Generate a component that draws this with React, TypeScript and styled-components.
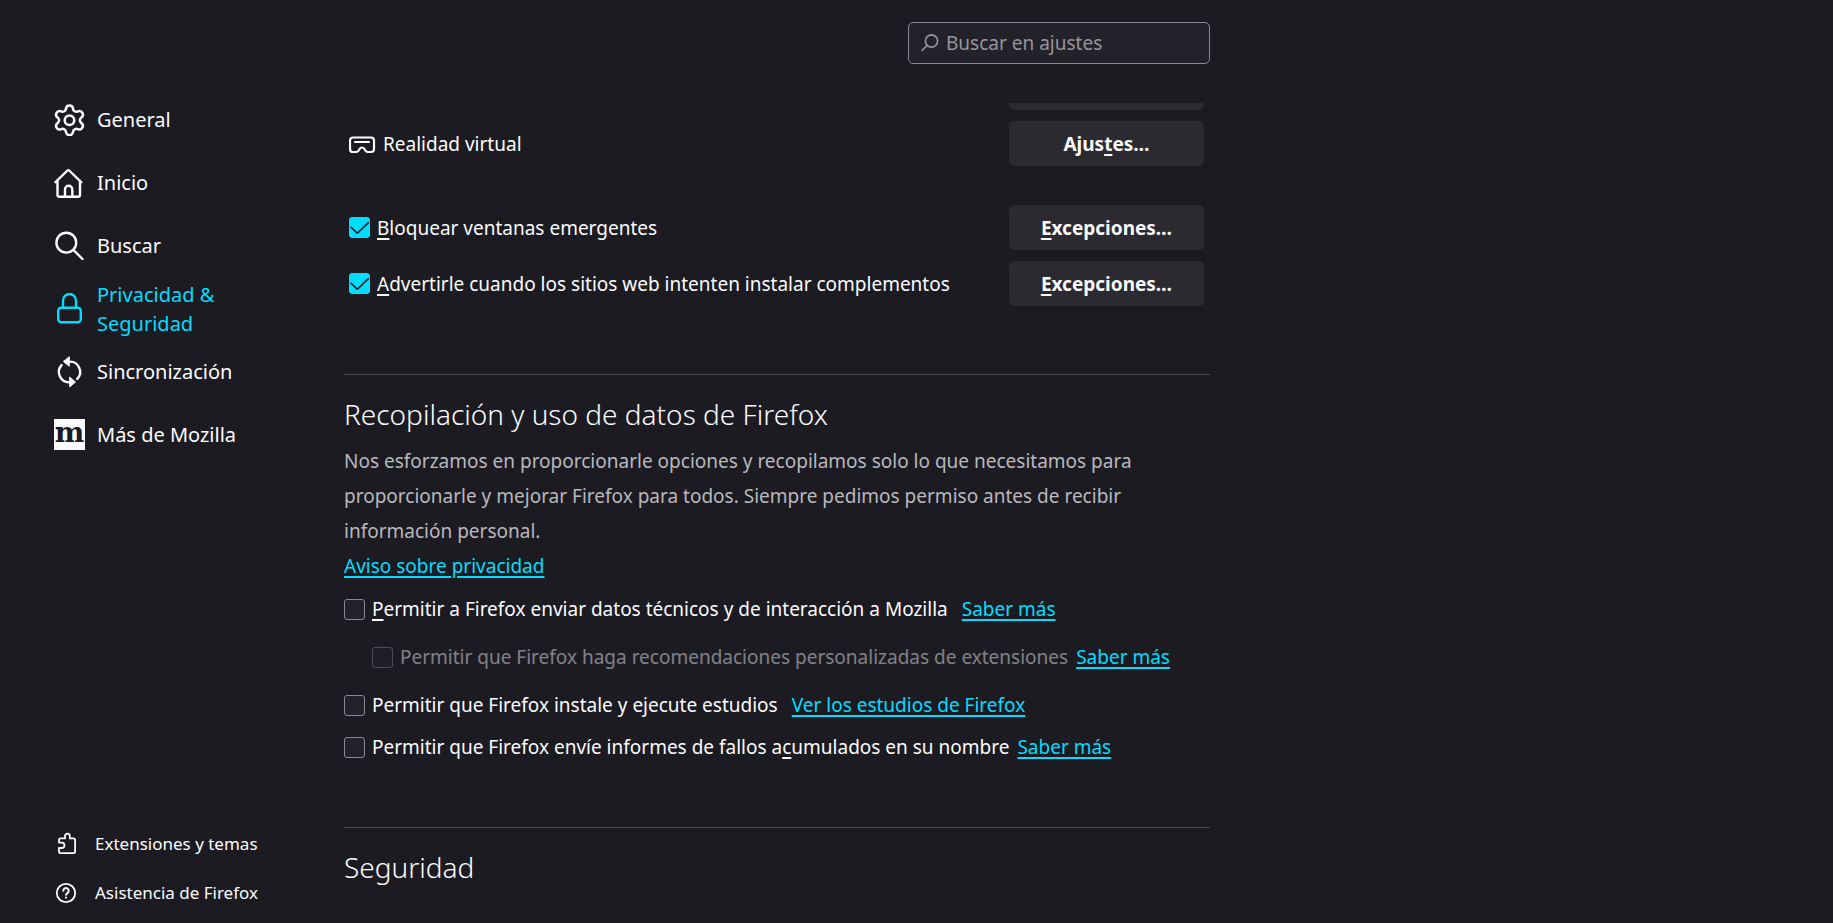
import React from "react";
import styled, { createGlobalStyle, css } from "styled-components";

const color = {
  page: "#1c1b22",
  text: "#fbfbfe",
  muted: "#b9b9bd",
  accent: "#00ddff",
  button: "#2b2a31",
  field: "#23222b",
  line: "#4b4a50",
  border: "#8a898f",
};

const GlobalStyle = createGlobalStyle`
  *, *::before, *::after { box-sizing: border-box; }
  body {
    margin: 0;
    background: ${color.page};
    color: ${color.text};
    font-family: "Noto Sans", "Open Sans", sans-serif;
    font-size: 19px;
    line-height: 28px;
  }
`;

const Page = styled.div`
  display: flex;
  height: 100vh;
  overflow: hidden;
`;

const Sidebar = styled.aside`
  display: flex;
  flex-direction: column;
  justify-content: space-between;
  flex: 0 0 344px;
  padding: 88px 48px 6px 54px;
`;

const NavList = styled.nav`
  display: flex;
  flex-direction: column;
`;

const NavLink = styled.a<{ $active?: boolean }>`
  display: flex;
  align-items: center;
  gap: 11px;
  width: 190px;
  height: 63px;
  color: ${(p) => (p.$active ? color.accent : color.text)};
  font-size: 20px;
  line-height: 29px;
  text-decoration: none;
`;

const FooterLink = styled.a`
  display: flex;
  align-items: center;
  gap: 16px;
  height: 49px;
  padding-left: 1px;
  color: ${color.text};
  font-size: 17px;
  text-decoration: none;
`;

const Icon = styled.svg`
  flex: none;
  fill: none;
  stroke: currentColor;
  stroke-linecap: round;
  stroke-linejoin: round;
`;

const MozillaMark = styled.span`
  display: grid;
  place-items: center;
  flex: none;
  width: 31px;
  height: 31px;
  margin-right: 1px;
  background: ${color.text};
  color: ${color.page};
  font: bold 28px/24px "DejaVu Serif", serif;
  padding-bottom: 4px;
`;

const Main = styled.main`
  display: flex;
  flex-direction: column;
  flex: 1;
  min-width: 0;
  max-width: 866px;
`;

const TopBar = styled.header`
  display: flex;
  flex: none;
  justify-content: flex-end;
  height: 103px;
  padding-top: 22px;
`;

const SearchBox = styled.label`
  display: flex;
  align-items: center;
  gap: 7px;
  width: 302px;
  height: 42px;
  padding: 0 12px;
  border: 1px solid ${color.border};
  border-radius: 5px;
  background: ${color.field};
  color: #96959b;
`;

const SearchInput = styled.input`
  flex: 1;
  min-width: 0;
  padding: 0;
  border: 0;
  outline: 0;
  background: transparent;
  color: ${color.text};
  font: inherit;
  &::placeholder { color: #96959b; opacity: 1; }
`;

const ScrollArea = styled.div`
  flex: 1;
  min-height: 0;
  overflow: hidden;
`;

const Permissions = styled.section`
  display: flex;
  flex-direction: column;
  gap: 11px;
  margin-top: -38px;
  padding: 0 6px 6px 5px;
`;

const PermissionRow = styled.div<{ $spaced?: boolean }>`
  display: flex;
  align-items: center;
  justify-content: space-between;
  ${(p) => p.$spaced && css`margin-top: 28px;`}
`;

const Label = styled.label<{ $disabled?: boolean }>`
  display: flex;
  align-items: center;
  gap: 7px;
  opacity: ${(p) => (p.$disabled ? 0.45 : 1)};
`;

const Button = styled.button`
  width: 195px;
  height: 45px;
  padding: 0;
  border: 0;
  border-radius: 5px;
  background: ${color.button};
  color: ${color.text};
  font: inherit;
  font-weight: 700;
`;

const AccessKey = styled.span`
  text-decoration: underline;
  text-decoration-thickness: 2px;
  text-underline-offset: 3px;
  text-decoration-skip-ink: none;
`;

const Box = styled.span`
  display: grid;
  flex: none;
  color: ${color.page};
  & > * { grid-area: 1 / 1; }
  & > svg { pointer-events: none; }
`;

const BoxInput = styled.input`
  appearance: none;
  width: 21px;
  height: 21px;
  margin: 0;
  border: 1px solid ${color.border};
  border-radius: 3px;
  background: ${color.field};
  &:checked { border-color: ${color.accent}; background: ${color.accent}; }
`;

const Section = styled.section`
  margin-top: 62px;
  border-top: 1px solid ${color.line};
`;

const SectionTitle = styled.h1`
  margin: 19px 0 0;
  font-size: 28px;
  font-weight: 300;
  line-height: 40px;
`;

const SubTitle = styled.h2`
  margin: 32px 0 0;
  font-size: 19px;
  font-weight: 700;
  line-height: 28px;
  white-space: nowrap;
`;

const Description = styled.p`
  margin: 10px 0 0;
  color: ${color.muted};
  line-height: 35px;
`;

const Link = styled.a`
  color: ${color.accent};
  text-decoration: underline;
  text-decoration-thickness: 2px;
  text-underline-offset: 3px;
`;

const Options = styled.div`
  display: flex;
  flex-direction: column;
  padding-top: 1px;
`;

const OptionRow = styled.div<{ $indent?: boolean; $compact?: boolean; $gap?: number }>`
  display: flex;
  align-items: center;
  gap: ${(p) => p.$gap ?? 12}px;
  height: ${(p) => (p.$compact ? 36 : 48)}px;
  padding-left: ${(p) => (p.$indent ? 28 : 0)}px;
  white-space: nowrap;
`;

function Check(props: { checked?: boolean; disabled?: boolean }) {
  return (
    <Box>
      <BoxInput type="checkbox" defaultChecked={props.checked} disabled={props.disabled} />
      {props.checked && (
        <Icon width="21" height="21" viewBox="0 0 21 21" strokeWidth="1.5">
          <path d="M2 10.3l5.6 5.3q.7.6 1.4 0L19.3 5.6" />
        </Icon>
      )}
    </Box>
  );
}

const NavIcon = (props: { children: React.ReactNode }) => (
  <Icon width="32" height="32" viewBox="0 0 32 32" strokeWidth="2.4">
    {props.children}
  </Icon>
);

export default function App() {
  return (
    <>
      <GlobalStyle />
      <Page>
        <Sidebar>
          <NavList>
            <NavLink href="#general">
              <NavIcon>
                <g transform="translate(-2.4 -1.6) scale(1.49)" strokeWidth="1.7">
                  <path d="M9.671 4.136a2.34 2.34 0 0 1 4.659 0 2.34 2.34 0 0 0 3.319 1.915 2.34 2.34 0 0 1 2.33 4.033 2.34 2.34 0 0 0 0 3.831 2.34 2.34 0 0 1-2.33 4.033 2.34 2.34 0 0 0-3.319 1.915 2.34 2.34 0 0 1-4.659 0 2.34 2.34 0 0 0-3.32-1.915 2.34 2.34 0 0 1-2.33-4.033 2.34 2.34 0 0 0 0-3.831A2.34 2.34 0 0 1 6.35 6.051a2.34 2.34 0 0 0 3.319-1.915" />
                  <circle cx="12" cy="12" r="3.2" />
                </g>
              </NavIcon>
              General
            </NavLink>
            <NavLink href="#inicio">
              <NavIcon>
                <path d="M1.5 15.2L12.9 4a2 2 0 0 1 2.8 0l11.5 11.2M3.5 13.8v13.9a2 2 0 0 0 2 2H24a2 2 0 0 0 2-2V13.8M11 29.5v-7.1a3.65 3.65 0 0 1 7.3 0v7.1" />
              </NavIcon>
              Inicio
            </NavLink>
            <NavLink href="#buscar">
              <NavIcon>
                <circle cx="12.3" cy="12.7" r="9.9" />
                <path d="M19.5 20l9 9" />
              </NavIcon>
              Buscar
            </NavLink>
            <NavLink href="#privacidad" $active aria-current="page">
              <NavIcon>
                <rect x="4.2" y="14.7" width="22.6" height="14.6" rx="3" />
                <path d="M9 14.5V7.5a6.5 6.5 0 0 1 13 0v7" />
              </NavIcon>
              Privacidad & Seguridad
            </NavLink>
            <NavLink href="#sincronizacion">
              <NavIcon>
                <path d="M15.5 5.6A10.2 10.2 0 0 1 23.2 22.9M15.5 26.2A10.2 10.2 0 0 1 7.6 9.1" />
                <path d="M15.3 1.1v9.2L9.6 5.7zM15.7 21.5v9.4l5.6-4.7z" fill="currentColor" strokeWidth="1" />
              </NavIcon>
              Sincronización
            </NavLink>
            <NavLink href="#mas">
              <MozillaMark aria-hidden="true">m</MozillaMark>
              Más de Mozilla
            </NavLink>
          </NavList>
          <NavList>
            <FooterLink href="#extensiones">
              <Icon width="24" height="24" viewBox="0 0 24 24" strokeWidth="1.8">
                <path d="M4 10.6V8a1.6 1.6 0 0 1 1.6-1.6H10V4.1a2.4 2.4 0 0 1 4.8 0v2.3h3.7A1.6 1.6 0 0 1 20.1 8v11.6a1.6 1.6 0 0 1-1.6 1.6H5.6A1.6 1.6 0 0 1 4 19.6V16h2.8a2.7 2.7 0 0 0 0-5.4z" />
              </Icon>
              Extensiones y temas
            </FooterLink>
            <FooterLink href="#asistencia">
              <Icon width="24" height="24" viewBox="0 0 24 24" strokeWidth="1.8">
                <circle cx="11" cy="12" r="9.2" />
                <path d="M8.3 9.8a2.7 2.7 0 1 1 4.5 2q-1.8 1.1-1.8 2M11 16.6v.1" strokeWidth="2" />
              </Icon>
              Asistencia de Firefox
            </FooterLink>
          </NavList>
        </Sidebar>
        <Main>
          <TopBar>
            <SearchBox>
              <Icon width="18" height="18" viewBox="0 0 18 18" strokeWidth="1.6">
                <circle cx="10.5" cy="7" r="6.1" />
                <path d="M6 11.6L1 16.4" />
              </Icon>
              <SearchInput type="search" placeholder="Buscar en ajustes" aria-label="Buscar en ajustes" />
            </SearchBox>
          </TopBar>
          <ScrollArea>
            <Permissions>
              <PermissionRow>
                <span />
                <Button aria-label="Ajustes" />
              </PermissionRow>
              <PermissionRow>
                <Label as="span">
                  <Icon width="27" height="20" viewBox="1 -1 27 20" strokeWidth="2.2">
                    <path d="M5 2.5h18a3 3 0 0 1 3 3V14a3 3 0 0 1-3 3h-3.3a2.5 2.5 0 0 1-2.1-1.2l-1.3-2a2.7 2.7 0 0 0-4.6 0l-1.3 2A2.5 2.5 0 0 1 8.300 17H5a3 3 0 0 1-3-3V5.500a3 3 0 0 1 3-3zM7 7h14" />
                  </Icon>
                  Realidad virtual
                </Label>
                <Button>
                  Ajus<AccessKey>t</AccessKey>es…
                </Button>
              </PermissionRow>
              <PermissionRow $spaced>
                <Label>
                  <Check checked />
                  <span><AccessKey>B</AccessKey>loquear ventanas emergentes</span>
                </Label>
                <Button>
                  <AccessKey>E</AccessKey>xcepciones…
                </Button>
              </PermissionRow>
              <PermissionRow>
                <Label>
                  <Check checked />
                  <span><AccessKey>A</AccessKey>dvertirle cuando los sitios web intenten instalar complementos</span>
                </Label>
                <Button>
                  <AccessKey>E</AccessKey>xcepciones…
                </Button>
              </PermissionRow>
            </Permissions>

            <Section>
              <SectionTitle>Recopilación y uso de datos de Firefox</SectionTitle>
              <Description>
                Nos esforzamos en proporcionarle opciones y recopilamos solo lo que necesitamos para
                <br />
                proporcionarle y mejorar Firefox para todos. Siempre pedimos permiso antes de recibir
                <br />
                información personal.
                <br />
                <Link href="#aviso">Aviso sobre privacidad</Link>
              </Description>
              <Options>
                <OptionRow $gap={14}>
                  <Label>
                    <Check />
                    <span><AccessKey>P</AccessKey>ermitir a Firefox enviar datos técnicos y de interacción a Mozilla</span>
                  </Label>
                  <Link href="#datos">Saber más</Link>
                </OptionRow>
                <OptionRow $indent $gap={8}>
                  <Label $disabled>
                    <Check disabled />
                    Permitir que Firefox haga recomendaciones personalizadas de extensiones
                  </Label>
                  <Link href="#recomendaciones">Saber más</Link>
                </OptionRow>
                <OptionRow $gap={14}>
                  <Label>
                    <Check />
                    Permitir que Firefox instale y ejecute estudios
                  </Label>
                  <Link href="#estudios">Ver los estudios de Firefox</Link>
                </OptionRow>
                <OptionRow $compact $gap={8}>
                  <Label>
                    <Check />
                    <span>Permitir que Firefox envíe informes de fallos a<AccessKey>c</AccessKey>umulados en su nombre</span>
                  </Label>
                  <Link href="#fallos">Saber más</Link>
                </OptionRow>
              </Options>
            </Section>

            <Section>
              <SectionTitle>Seguridad</SectionTitle>
              <SubTitle>Protección contra contenido engañoso y software peligroso</SubTitle>
            </Section>
          </ScrollArea>
        </Main>
      </Page>
    </>
  );
}
